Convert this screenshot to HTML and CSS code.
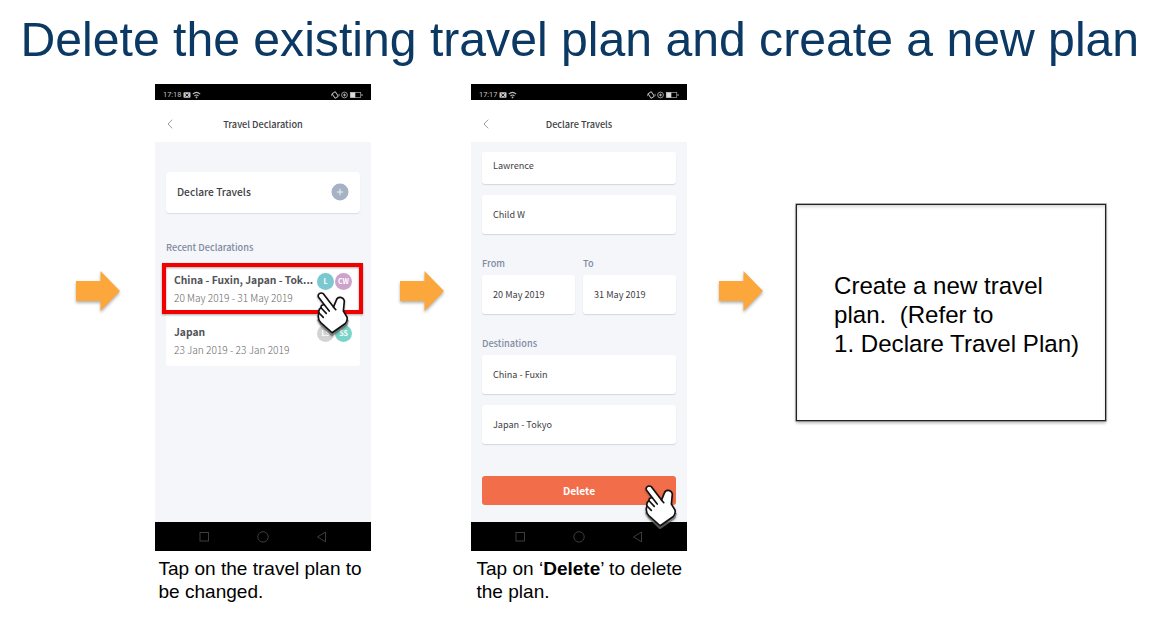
FILE: index.html
```html
<!DOCTYPE html>
<html lang="en">
<head>
<meta charset="utf-8">
<title>Delete the existing travel plan</title>
<link rel="stylesheet" href="styles.css">
</head>
<body>
<svg class="defs" width="0" height="0" aria-hidden="true">
  <symbol id="arrow" viewBox="0 0 44 40"><path d="M0 10H24.5V0L44 20L24.5 40V30H0Z" fill="#fba73b"/></symbol>
  <symbol id="hand" viewBox="0 0 100 140">
    <path d="M4 82L14 98L46 128L88 98L91 84" fill="none" stroke="#6f6f6f" stroke-width="11" stroke-linejoin="round" opacity=".75"/>
    <path d="M4 15C1 6 10 0 19 5L50 46L59 24C63 13 79 14 83 27L80 58L91 76C93 84 91 90 86 96L46 124L12 94C4 86 2 74 6 64C4 56 8 50 12 48C11 41 16 38 22 39Z" fill="#fff" stroke="#111" stroke-width="5" stroke-linejoin="round"/>
    <path d="M22 39L37 58M12 48L28 65M6 64L19 77M50 46L57 54" fill="none" stroke="#111" stroke-width="5" stroke-linecap="round"/>
  </symbol>
  <symbol id="left-icons" viewBox="0 0 20 8">
    <rect x=".5" y="1.2" width="7" height="5.6" rx=".8" fill="#ccc"/><path d="M2.3 2.7L5.6 5.5M5.6 2.7L2.3 5.5" stroke="#111"/>
    <path d="M9.8 3.2Q13.5 -.3 17.2 3.2M11.5 5Q13.5 3 15.5 5" fill="none" stroke="#bbb" stroke-width="1.1"/><circle cx="13.5" cy="6.4" r=".9" fill="#bbb"/>
  </symbol>
  <symbol id="right-icons" viewBox="0 0 32 8">
    <rect x="2.3" y="1.2" width="3.8" height="5.6" rx=".8" fill="none" stroke="#bbb" transform="rotate(-35 4.2 4)"/><path d="M.3 2.8V5.2M8.1 2.8V5.2" stroke="#aaa" stroke-width=".8"/>
    <circle cx="13.5" cy="4" r="2.9" fill="none" stroke="#bbb" stroke-width=".8"/><path d="M12 4H15M13.5 2.6V5.4" stroke="#bbb" stroke-width=".9"/>
    <rect x="19.3" y="1.4" width="10.4" height="5.2" fill="none" stroke="#aaa" stroke-width=".7"/><rect x="19.3" y="1.4" width="5" height="5.2" fill="#ddd"/><path d="M31 3V5" stroke="#aaa"/>
  </symbol>
  <symbol id="back" viewBox="0 0 6 10"><path d="M5.2 .7L1 5L5.2 9.3" fill="none" stroke="#8c8f96" stroke-width=".9"/></symbol>
  <symbol id="nav" viewBox="0 0 216 28">
    <g fill="none" stroke="#444" stroke-width=".9"><rect x="45" y="10" width="8.5" height="8.5"/><circle cx="108" cy="14.4" r="5.2"/><path d="M170.5 9.5V19.3L162.5 14.4Z"/></g>
  </symbol>
</svg>

<main class="slide">
  <h1 class="title">Delete the existing travel plan and create a new plan</h1>
  <div class="flow">
    <svg class="arrow"><use href="#arrow"/></svg>

    <section class="step step-list">
      <div class="phone">
        <div class="status"><span class="time">17:18</span><svg class="status-left"><use href="#left-icons"/></svg><svg class="status-right"><use href="#right-icons"/></svg></div>
        <header class="bar"><svg class="back"><use href="#back"/></svg><span class="bar-title">Travel Declaration</span></header>
        <div class="screen">
          <div class="declare"><span class="declare-text">Declare Travels</span><svg class="plus" viewBox="0 0 18 18"><circle cx="9" cy="9" r="8.5" fill="#a6b1c3"/><path d="M9 5.8V12.2M5.8 9H12.2" stroke="#edf1f6"/></svg></div>
          <div class="label recent">Recent Declarations</div>
          <div class="trips">
            <div class="trip">
              <div class="trip-text"><b class="trip-name">China - Fuxin, Japan - Tok...</b><span class="trip-date">20 May 2019 - 31 May 2019</span></div>
              <div class="people"><i class="person teal">L</i><i class="person pink">CW</i></div>
            </div>
            <div class="trip">
              <div class="trip-text"><b class="trip-name">Japan</b><span class="trip-date">23 Jan 2019 - 23 Jan 2019</span></div>
              <div class="people"><i class="person gray">LS</i><i class="person mint">SS</i></div>
            </div>
            <div class="highlight"></div>
            <svg class="hand hand-list"><use href="#hand"/></svg>
          </div>
        </div>
        <svg class="nav"><use href="#nav"/></svg>
      </div>
      <p class="caption caption-list">Tap on the travel plan to<br>be changed.</p>
    </section>

    <svg class="arrow"><use href="#arrow"/></svg>

    <section class="step step-delete">
      <div class="phone">
        <div class="status"><span class="time">17:17</span><svg class="status-left"><use href="#left-icons"/></svg><svg class="status-right"><use href="#right-icons"/></svg></div>
        <header class="bar"><svg class="back"><use href="#back"/></svg><span class="bar-title">Declare Travels</span></header>
        <div class="screen form">
          <div class="field field-cut">Lawrence</div>
          <div class="field">Child W</div>
          <div class="dates">
            <div class="date"><div class="label">From</div><div class="field">20 May 2019</div></div>
            <div class="date"><div class="label">To</div><div class="field">31 May 2019</div></div>
          </div>
          <div class="label destinations">Destinations</div>
          <div class="field">China - Fuxin</div>
          <div class="field">Japan - Tokyo</div>
          <div class="delete">Delete<svg class="hand hand-delete"><use href="#hand"/></svg></div>
        </div>
        <svg class="nav"><use href="#nav"/></svg>
      </div>
      <p class="caption caption-delete">Tap on ‘<b>Delete</b>’ to delete<br>the plan.</p>
    </section>

    <svg class="arrow"><use href="#arrow"/></svg>

    <section class="note"><p class="note-text">Create a new travel
plan.  (Refer to
1. Declare Travel Plan)</p></section>
  </div>
</main>
</body>
</html>
```

FILE: styles.css
```css
* { box-sizing: border-box; }
body { margin: 0; background: #fff; }
.defs { display: block; height: 0; }
.slide { width: 1161px; height: 634px; overflow: hidden; font-family: "Liberation Sans", Arial, sans-serif; color: #000; }
.title { margin: 0; height: 84px; padding: 11px 0 0 20.5px; font-size: 48.15px; line-height: 56px; font-weight: 400; color: #0c3963; white-space: nowrap; }
.flow { display: flex; align-items: flex-start; padding-left: 76px; }
.arrow { width: 44px; height: 40px; margin-top: 187px; flex: none; overflow: visible; filter: drop-shadow(0 2px 1.5px rgba(0,0,0,.3)); }
.step { width: 216px; flex: none; }
.step-list { margin: 0 29px 0 35px; }
.step-delete { margin: 0 32px 0 27px; }

.phone { display: flex; flex-direction: column; height: 467px; background: #f4f6fa; font-family: "Noto Sans CJK JP", sans-serif; color: #3e4146; }
.status { display: flex; align-items: center; height: 16px; padding: 6px 8px 0 8px; background: #000; color: #c4c4c4; font: 7.4px/8px Roboto, sans-serif; flex: none; }
.status-left { width: 20px; height: 8px; margin-left: 2px; }
.status-right { width: 32px; height: 8px; margin-left: auto; }
.bar { display: flex; align-items: center; height: 42px; padding: 6px 12px 0; background: #fff; flex: none; }
.back { width: 6px; height: 10px; }
.bar-title { flex: 1; padding-right: 6px; text-align: center; font-size: 9.2px; line-height: 14px; font-weight: 500; }
.screen { flex: 1; padding: 30px 11px 0; min-height: 0; }
.nav { width: 216px; height: 29px; background: #000; flex: none; }

.declare { display: flex; justify-content: space-between; align-items: center; height: 41px; padding: 0 11px 1px; border-radius: 4px; background: #fff; box-shadow: 0 1px 1px #d9dde5; font-size: 10.2px; line-height: 16px; font-weight: 500; }
.plus { width: 18px; height: 18px; }
.label { color: #8189a0; font-size: 9.2px; line-height: 14px; font-weight: 500; }
.recent { margin-top: 27px; }
.trips { position: relative; margin-top: 13px; height: 99px; border-radius: 3px; background: #fff; }
.trip { display: flex; justify-content: space-between; height: 52px; padding: 4px 8px 0 8px; }
.trip-text { display: flex; flex-direction: column; white-space: nowrap; }
.trip-name { font-size: 10.3px; line-height: 18px; font-weight: 700; color: #505257; }
.trip-date { font-size: 10.15px; line-height: 18px; font-weight: 300; color: #666; }
.people { display: flex; gap: 1px; padding-top: 2px; }
.person { width: 17px; height: 17px; border-radius: 50%; font-size: 7px; line-height: 17px; font-style: normal; font-weight: 700; text-align: center; color: #fff; }
.teal { background: #7bc8d1; }
.pink { background: #cda2cb; }
.gray { background: #d3d3d3; }
.mint { background: #79d5c9; }
.highlight { position: absolute; left: -4px; top: -4px; width: 201px; height: 51px; border: 4px solid #f20000; filter: drop-shadow(0 1.5px 1px rgba(0,0,0,.35)); }
.hand { position: absolute; width: 33px; height: 46px; overflow: visible; filter: drop-shadow(0 1px 1px rgba(0,0,0,.3)); }
.hand-list { left: 151px; top: 25px; }

.form { display: flex; flex-direction: column; padding-top: 10px; }
.field { height: 39px; flex: none; margin-bottom: 11px; padding-left: 11px; border-radius: 3px; background: #fff; box-shadow: 0 1px 1px #d4d7df; font-size: 9.1px; line-height: 39px; font-weight: 400; }
.field-cut { height: 32px; line-height: 27px; }
.dates { display: flex; gap: 8px; margin-top: 11px; }
.date { width: 93px; }
.dates .label { margin-bottom: 5px; }
.destinations { margin: 11px 0 5px; }
.delete { position: relative; height: 29px; flex: none; margin-top: 21px; border-radius: 3px; background: #f26d49; color: #fff; font-size: 10.2px; line-height: 29px; font-weight: 700; text-align: center; }
.hand-delete { left: 163px; top: 9px; }

.caption { margin: 6px 0 0; font-size: 19.05px; line-height: 23px; white-space: nowrap; }
.caption-list { padding-left: 3.5px; }
.caption-delete { padding-left: 5.5px; }
.note { width: 310px; height: 217px; margin: 120px 0 0 33px; padding: 66px 0 0 37px; border: 1px solid #222; box-shadow: 0 0 0 .6px #777, 0 2px 3px rgba(0,0,0,.3), inset 0 2px 3px rgba(0,0,0,.15); flex: none; }
.note-text { margin: 0; font-size: 24.1px; line-height: 29px; white-space: pre; }
```
